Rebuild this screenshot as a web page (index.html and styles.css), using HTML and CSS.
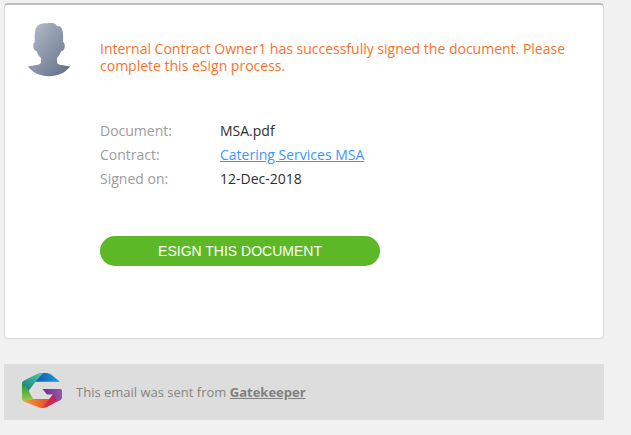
FILE: index.html
```html
<!DOCTYPE html>
<html lang="en">
<head>
<meta charset="utf-8">
<title>eSign notification</title>
<link rel="stylesheet" href="styles.css">
</head>
<body>
<main class="card">
  <svg class="avatar" viewBox="0 0 44 54" aria-hidden="true">
    <defs>
      <linearGradient id="skin" x1="0" y1="0" x2="1" y2="1">
        <stop offset="0" stop-color="#b8c0cc"/>
        <stop offset="1" stop-color="#5f6c86"/>
      </linearGradient>
    </defs>
    <path fill="url(#skin)" d="M7.8 19C7.4 14 7.5 8 9 5C11 1 15 0 20 .2C24 -.2 27 0 29 1.5L30 3L33 3.5C36.5 6 36.3 13 36 19C38.5 20 38.2 26 36 27.5L34 28.5C33.3 31 31 34 30 35V39.5C31 42.5 37 42 43.2 43.5C38 50 31 53.2 22 53.2C13 53.2 6 50 .8 43.5C7 42 13 42.5 14 39.5V35C12.5 34 10.5 31 9.8 28.5L8 27.5C5.8 26 5.5 20 7.8 19Z"/>
  </svg>
  <div class="content">
    <p class="message">Internal Contract Owner1 has successfully signed the document. Please complete this eSign process.</p>
    <dl class="details">
      <dt>Document:</dt><dd>MSA.pdf</dd>
      <dt>Contract:</dt><dd><a class="link" href="#">Catering Services MSA</a></dd>
      <dt>Signed on:</dt><dd>12-Dec-2018</dd>
    </dl>
    <a class="button" href="#">ESIGN THIS DOCUMENT</a>
  </div>
</main>
<footer class="footer">
  <svg class="logo" viewBox="0 0 40 35" aria-hidden="true">
    <defs>
      <linearGradient id="blue"><stop offset="0" stop-color="#1558a5"/><stop offset="1" stop-color="#1a9de0"/></linearGradient>
      <linearGradient id="teal" x1="0" y1="1" x2="1" y2="0"><stop offset="0" stop-color="#087d78"/><stop offset="1" stop-color="#5cc9a4"/></linearGradient>
      <linearGradient id="green" x1="0" y1="0" x2="0" y2="1"><stop offset="0" stop-color="#22883f"/><stop offset="1" stop-color="#9bd14b"/></linearGradient>
      <linearGradient id="orange"><stop offset="0" stop-color="#fb9935"/><stop offset="1" stop-color="#df4a28"/></linearGradient>
      <linearGradient id="red" x1="0" y1="1" x2="1" y2="0"><stop offset="0" stop-color="#e53431"/><stop offset="1" stop-color="#b91c65"/></linearGradient>
      <linearGradient id="purple"><stop offset="0" stop-color="#6f2c8e"/><stop offset="1" stop-color="#9657b0"/></linearGradient>
    </defs>
    <path fill="url(#blue)" d="M18 0H25Q27 .2 29 1.5L38 8.7H13Z"/>
    <path fill="url(#teal)" d="M0 10Q0 8.5 2 7.5L15 1Q18 -.2 21 0L13.5 8.7L6.5 18Z"/>
    <path fill="url(#green)" d="M0 9.5L6.5 17.5L11 26L2 28.5Q0 27.5 0 26Z"/>
    <path fill="url(#orange)" d="M11 26H28L21 35Q18 35 15 33.5L3 29Q2 28.6 1.5 28Z"/>
    <path fill="url(#red)" d="M20 35L32 20L36 28L25 34Q23 35 20 35Z"/>
    <path fill="url(#purple)" d="M20.5 16H38.5Q40 16 40 17.5V24.5Q40 26 38.5 27L35.5 28.7L31.5 21.5H25Z"/>
  </svg>
  <p class="sent">This email was sent from <a class="brand" href="#">Gatekeeper</a></p>
</footer>
</body>
</html>
```
FILE: styles.css
```css
* { box-sizing: border-box; }

body {
  margin: 0;
  padding: 3px 0 0 4px;
  background: #f1f1f1;
  font-family: "Open Sans", sans-serif;
  font-size: 14px;
}

p, dl, dd { margin: 0; }

.card {
  display: flex;
  align-items: flex-start;
  width: 600px;
  height: 336px;
  padding: 18px 31px 0 22px;
  background: #fff;
  border: 1px solid #d6d6d6;
  border-top: 2px solid #bdbdbd;
  border-radius: 4px;
}

.avatar {
  flex: none;
  width: 44px;
  height: 54px;
}

.content {
  padding: 17px 0 0 29px;
}

.message {
  width: 480px;
  color: #f8722a;
  line-height: 17px;
}

.details {
  display: grid;
  grid-template-columns: 120px 1fr;
  margin-top: 45px;
  line-height: 24px;
}

.details dt { color: #9c9c9c; }
.details dd { color: #2e2e2e; }

.link { color: #4096f8; }

.button {
  display: block;
  width: 280px;
  height: 30px;
  margin-top: 45px;
  border-radius: 15px;
  background: #5cb826;
  color: #fff;
  font: 14px/30px "Liberation Sans", sans-serif;
  text-align: center;
  text-decoration: none;
}

.footer {
  display: flex;
  align-items: center;
  width: 600px;
  height: 56px;
  margin-top: 25px;
  padding-left: 18px;
  background: #ddd;
}

.logo {
  width: 40px;
  height: 35px;
  margin-bottom: 3px;
}

.sent {
  margin-left: 14px;
  color: #858580;
  font-size: 13px;
  line-height: 18px;
}

.brand {
  color: #808080;
  font-weight: 700;
}
```
